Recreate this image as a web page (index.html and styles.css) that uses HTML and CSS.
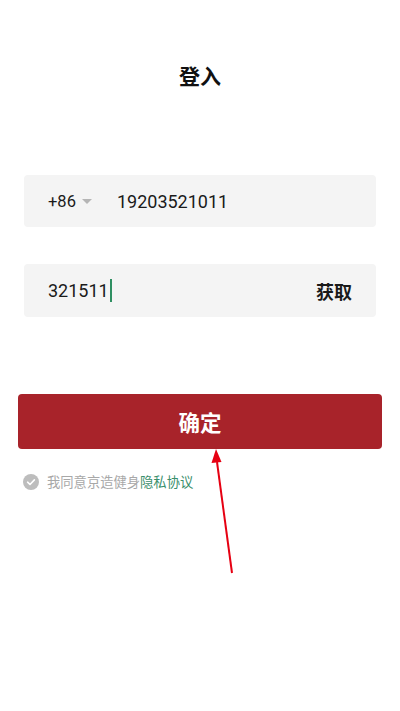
FILE: index.html
```html
<!DOCTYPE html>
<html lang="zh-CN">
<head>
  <meta charset="UTF-8">
  <meta name="viewport" content="width=device-width, initial-scale=1.0">
  <title>登入</title>
  <link rel="stylesheet" href="styles.css">
</head>
<body>
  <div class="page">
    <h1 class="title">登入</h1>

    <div class="field">
      <span class="area">+86</span>
      <span class="caret-down"></span>
      <span class="phone">19203521011</span>
    </div>

    <div class="field field-code">
      <span class="code">321511</span><span class="cursor"></span>
      <span class="fetch">获取</span>
    </div>

    <button class="submit">确定</button>

    <div class="agree">
      <span class="check">
        <svg width="16" height="16" viewBox="0 0 16 16">
          <circle cx="8" cy="8" r="8" fill="#bdbdbd"/>
          <path d="M4.6 8.2 L7 10.5 L11.4 5.9" fill="none" stroke="#fff" stroke-width="1.6" stroke-linecap="round" stroke-linejoin="round"/>
        </svg>
      </span>
      <span class="agree-text">我同意京造健身<span class="link">隐私协议</span></span>
    </div>
  </div>

  <svg class="arrow" width="400" height="711" viewBox="0 0 400 711">
    <line x1="232" y1="573" x2="217" y2="462" stroke="#e60012" stroke-width="2"/>
    <polygon points="216,449 211.5,463 221.5,462" fill="#e60012"/>
  </svg>
</body>
</html>
```

FILE: styles.css
```css
body {
  margin: 0;
  background: #fff;
  font-family: Roboto, "Noto Sans CJK SC", sans-serif;
  color: #1a1a1a;
}
.page {
  width: 400px;
  height: 711px;
  box-sizing: border-box;
  padding: 61px 0 0;
}
.title {
  margin: 0;
  text-align: center;
  font-size: 21px;
  font-weight: bold;
  line-height: 32px;
  color: #111;
}
.field {
  display: flex;
  align-items: center;
  margin: 82px 24px 0;
  height: 52px;
  padding: 0 24px;
  background: #f4f4f4;
  border-radius: 4px;
}
.field-code {
  margin-top: 37px;
  height: 53px;
}
.area {
  font-size: 16.5px;
}
.caret-down {
  width: 0;
  height: 0;
  margin-left: 6px;
  border-left: 5px solid transparent;
  border-right: 5px solid transparent;
  border-top: 5px solid #b5b5b5;
}
.phone {
  margin-left: 25px;
  font-size: 18px;
}
.code {
  font-size: 18px;
}
.cursor {
  width: 2px;
  height: 23px;
  margin-left: 1px;
  background: #2f8f62;
}
.fetch {
  margin-left: auto;
  font-size: 18px;
  font-weight: bold;
}
.submit {
  display: block;
  width: 364px;
  height: 55px;
  margin: 77px 18px 0;
  border: none;
  border-radius: 4px;
  background: #a8232a;
  color: #fff;
  font-family: inherit;
  font-size: 21.5px;
  font-weight: bold;
}
.agree {
  display: flex;
  align-items: center;
  margin: 23px 0 0 23px;
}
.check {
  display: flex;
  margin-right: 8px;
}
.agree-text {
  font-size: 13.3px;
  color: #a8a8a8;
}
.link {
  color: #3a8f6c;
}
.arrow {
  position: absolute;
  left: 0;
  top: 0;
  pointer-events: none;
}
```
